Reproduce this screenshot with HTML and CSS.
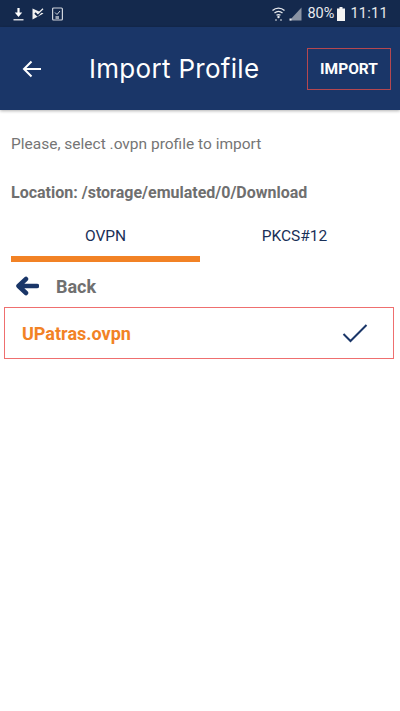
FILE: index.html
```html
<!DOCTYPE html>
<html lang="en">
<head>
    <meta charset="UTF-8">
    <meta name="viewport" content="width=device-width, initial-scale=1.0">
    <title>Import Profile</title>
    <link rel="stylesheet" href="styles.css">
</head>
<body>

<div class="status-bar">
    <div class="status-left">
        <svg class="status-icon" width="11" height="14" viewBox="0 0 11 14">
            <path d="M5.500 1V8" stroke="#fff" stroke-width="2.200"/>
            <path d="M1.800 5.500H9.200L5.500 10Z" fill="#fff"/>
            <path d="M0.500 12.800H10.500" stroke="#fff" stroke-width="1.200"/>
        </svg>
        <svg class="status-icon" width="12" height="14" viewBox="0 0 12 14">
            <path d="M0.500 1.500L11.500 6.500L0.500 12.500Z" fill="#f2f2f2"/>
            <path d="M3 6L5.500 8.500L11.500 2.500" fill="none" stroke="#14294d" stroke-width="1.800"/>
            <path d="M5.500 7L11 1.800" fill="none" stroke="#f2f2f2" stroke-width="1.200"/>
        </svg>
        <svg class="status-icon" width="11" height="14" viewBox="0 0 11 14">
            <rect x="0.600" y="1" width="9.800" height="12" rx="1" fill="none" stroke="#cfd4dc" stroke-width="1.200"/>
            <path d="M3 5.500L5 7.500L8 4" fill="none" stroke="#cfd4dc" stroke-width="1"/>
            <rect x="3.500" y="9" width="3.500" height="3" fill="#9aa3b2"/>
        </svg>
    </div>
    <div class="status-right">
        <svg class="wifi" width="13" height="15" viewBox="0 0 13 15">
            <path d="M0.500 4.500C4 1.300 9 1.300 12.500 4.500M2.500 7C5 4.900 8 4.900 10.500 7M4.500 9.300C5.700 8.400 7.300 8.400 8.500 9.300" fill="none" stroke="#e6e8ec" stroke-width="1.300"/>
            <circle cx="6.500" cy="11" r="1.200" fill="#e6e8ec"/>
            <path d="M4 15V13M9 15V13" stroke="#b8bec8" stroke-width="1.200"/>
        </svg>
        <svg class="signal" width="13" height="14" viewBox="0 0 13 14">
            <path d="M12.500 0.500V13.500H0.500Z" fill="#8a93a3"/>
            <rect x="0.500" y="11.500" width="2" height="2" fill="#e6e8ec"/>
        </svg>
        <span class="status-pct">80%</span>
        <svg class="battery" width="8" height="14" viewBox="0 0 8 14">
            <path d="M2.500 0H5.500V1.500H8V14H0V1.500H2.500Z" fill="#f4f4f4"/>
        </svg>
        <span class="status-time">11:11</span>
    </div>
</div>

<header class="app-bar">
    <svg class="app-back" width="20" height="18" viewBox="0 0 20 18">
        <path d="M19 9H2M9.500 1.500L2 9L9.500 16.500" fill="none" stroke="#fff" stroke-width="2"/>
    </svg>
    <h1 class="app-title">Import Profile</h1>
    <div class="import-btn">IMPORT</div>
</header>

<main class="content">
    <p class="hint">Please, select .ovpn profile to import</p>
    <p class="location">Location: /storage/emulated/0/Download</p>

    <div class="tabs">
        <div class="tab tab-active">OVPN</div>
        <div class="tab">PKCS#12</div>
    </div>

    <div class="back-row">
        <svg width="24" height="20" viewBox="0 0 24 20">
            <path d="M22 10H4M11 3L3.500 10L11 17" fill="none" stroke="#1a3668" stroke-width="4.500" stroke-linecap="round" stroke-linejoin="round"/>
        </svg>
        <span>Back</span>
    </div>

    <div class="file-row">
        <span class="file-name">UPatras.ovpn</span>
        <svg width="26" height="20" viewBox="0 0 26 20">
            <path d="M1.500 11L8.500 18L24.500 2" fill="none" stroke="#1a3668" stroke-width="2"/>
        </svg>
    </div>
</main>

</body>
</html>
```

FILE: styles.css
```css
* {
    box-sizing: border-box;
}
body {
    margin: 0;
    background-color: #fff;
    font-family: Roboto, sans-serif;
}
.status-bar {
    display: flex;
    justify-content: space-between;
    align-items: center;
    height: 27px;
    padding: 0 12px 0 13px;
    background-color: #14294d;
    color: #e8eaee;
}
.status-left, .status-right {
    display: flex;
    align-items: center;
}
.status-left {
    gap: 8px;
}
.status-icon {
    display: block;
}
.status-right {
    font-size: 14.500px;
}
.wifi {
    margin-right: 4px;
}
.signal {
    margin-right: 5px;
}
.status-pct {
    margin-right: 3px;
}
.battery {
    margin-right: 5px;
}
.status-time {
    letter-spacing: 0.3px;
}
.app-bar {
    display: flex;
    align-items: center;
    height: 83px;
    padding: 0 9px 0 22px;
    background-color: #1a3668;
    color: #fff;
    box-shadow: 0 1px 3px rgba(0, 0, 0, 0.3);
}
.app-title {
    flex: 1;
    margin: 0 0 0 47px;
    font-family: Inter, sans-serif;
    font-size: 26px;
    font-weight: 400;
    letter-spacing: 0.3px;
}
.import-btn {
    display: flex;
    align-items: center;
    justify-content: center;
    width: 84px;
    height: 42px;
    border: 1px solid #b5474f;
    font-size: 15.500px;
    font-weight: 700;
}
.hint {
    margin: 0;
    padding: 24px 11px 0;
    font-size: 15.500px;
    line-height: 20px;
    color: #757575;
}
.location {
    margin: 0;
    padding: 29px 11px 0;
    font-size: 16px;
    line-height: 20px;
    font-weight: 700;
    color: #6f6f6f;
}
.tabs {
    display: flex;
    margin: 13px 0 0 11px;
}
.tab {
    width: 189px;
    height: 46px;
    padding-top: 10px;
    text-align: center;
    font-size: 15.500px;
    line-height: 20px;
    color: #1a3058;
}
.tab + .tab {
    flex: 1;
    padding-right: 11px;
}
.tab-active {
    border-bottom: 6px solid #f28225;
}
.back-row {
    display: flex;
    align-items: center;
    gap: 17px;
    height: 45px;
    padding: 3px 0 0 15px;
    font-size: 18px;
    font-weight: 700;
    color: #707070;
}
.file-row {
    display: flex;
    align-items: center;
    justify-content: space-between;
    height: 52px;
    margin: 0 6px 0 4px;
    padding: 0 25px 0 17px;
    border: 1px solid #ef6f6f;
}
.file-name {
    font-size: 18px;
    font-weight: 700;
    color: #f28225;
}
```
